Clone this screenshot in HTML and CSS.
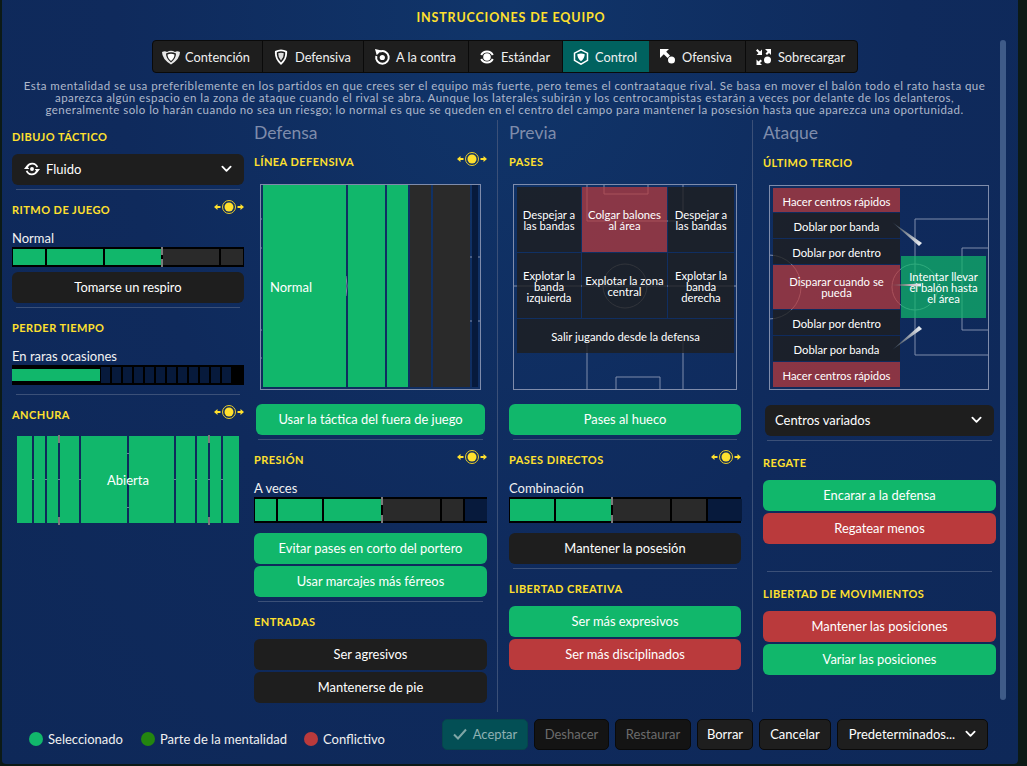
FILE: index.html
```html
<!DOCTYPE html>
<html lang="es">
<head>
<meta charset="utf-8">
<title>Instrucciones de equipo</title>
<link rel="stylesheet" href="styles.css">
</head>
<body>
<svg class="defs" width="0" height="0" aria-hidden="true">
  <symbol id="sun" viewBox="0 0 30 14">
    <circle cx="15" cy="7" r="4.500" fill="#ffe02e"/>
    <circle cx="15" cy="7" r="6.500" fill="none" stroke="#e8cc2c" stroke-width="1"/>
    <path d="M0 7l3.500-3v2h3v2h-3v2zM30 7l-3.500-3v2h-3v2h3v2z" fill="#ffe02e"/>
  </symbol>
  <symbol id="chev" viewBox="0 0 12 8">
    <path d="M1.500 1.500L6 6l4.500-4.500" fill="none" stroke="#fff" stroke-width="2" stroke-linecap="round" stroke-linejoin="round"/>
  </symbol>
</svg>
<main class="window">
  <h1 class="title">INSTRUCCIONES DE EQUIPO</h1>
  <nav class="tabs">
    <div class="tab t1"><svg class="ti" viewBox="0 0 18 16"><path d="M0 3q3-1.500 5 0 4-2.500 8 0 2-1.500 5 0 0 7-9 12.500Q0 10 0 3z" fill="#e8e8e8"/><path d="M4 4.500q5-2.500 10 0 0 5-5 9-5-4-5-9z" fill="#1e1e1e"/><path d="M5.500 5.500q3.500-1.500 7 0 0 3.500-3.500 6.500-3.500-3-3.500-6.500z" fill="#fff"/></svg>Contención</div>
    <div class="tab t2"><svg class="ti" viewBox="0 0 18 16"><path d="M3 2q6-3 12 0 1 8-6 14Q2 10 3 2z" fill="#fff"/><path d="M4.800 3.200q4.200-2 8.400 0 .5 6-4.200 10.300Q4.300 9.200 4.800 3.200z" fill="#1e1e1e"/><path d="M6.200 4.300q2.800-1 5.600 0 .2 4-2.800 7.300-3-3.300-2.800-7.300z" fill="#dcdcdc"/></svg>Defensiva</div>
    <div class="tab t3"><svg class="ti" viewBox="0 0 18 16"><path d="M7 2.600A6.300 6.300 0 1 1 3.300 7" fill="none" stroke="#fff" stroke-width="2"/><path d="M2 0l6.500 1.500-4.800 4.800z" fill="#fff"/><circle cx="9.300" cy="8.500" r="2.600" fill="#fff"/></svg>A la contra</div>
    <div class="tab t4"><svg class="ti" viewBox="0 0 18 16"><path d="M3.200 6A6.500 6.500 0 0 1 14.800 6M14.800 10A6.500 6.500 0 0 1 3.200 10" fill="none" stroke="#fff" stroke-width="2"/><circle cx="9" cy="8" r="3.800" fill="#fff"/></svg>Estándar</div>
    <div class="tab t5 active"><svg class="ti" viewBox="0 0 18 16"><path d="M9 .8l6.500 3.400v7.200L9 15.200 2.500 11.400V4.200z" fill="none" stroke="#fff" stroke-width="1.500"/><path d="M5.300 5.300Q9 3.500 12.700 5.300 12.700 9.500 9 12.300 5.300 9.500 5.300 5.300z" fill="#fff"/></svg>Control</div>
    <div class="tab t6"><svg class="ti" viewBox="0 0 18 16"><path d="M1 0h9L7.200 2.800 11 6.600 8.600 9 4.800 5.200 1 9z" fill="#fff"/><circle cx="12.500" cy="11" r="3.500" fill="#fff"/></svg>Ofensiva</div>
    <div class="tab t7"><svg class="ti" viewBox="0 0 18 16"><path d="M10 0h6v6l-2-2-2 2-1.500-1.500 2-2zM1 1.500l1.500-1.500 2.500 2.500L7 .5v5.500H1.500l2-2zM1.500 16v-5.500l2 2 2-2L7 12l-2 2 2 2z" fill="#fff"/><circle cx="12.500" cy="11" r="3.500" fill="#fff"/></svg>Sobrecargar</div>
  </nav>
  <p class="desc">Esta mentalidad se usa preferiblemente en los partidos en que crees ser el equipo más fuerte, pero temes el contraataque rival. Se basa en mover el balón todo el rato hasta que<br>aparezca algún espacio en la zona de ataque cuando el rival se abra. Aunque los laterales subirán y los centrocampistas estarán a veces por delante de los delanteros,<br>generalmente solo lo harán cuando no sea un riesgo; lo normal es que se queden en el centro del campo para mantener la posesión hasta que aparezca una oportunidad.</p>

  <div class="cols">
    <section class="col col-a">
      <h2 class="sec first">DIBUJO TÁCTICO</h2>
      <div class="select mt9"><svg class="fluid" viewBox="0 0 18 18"><path d="M3.500 6.500A6.200 6.200 0 0 1 15 7M14.500 11.500A6.200 6.200 0 0 1 3 11" fill="none" stroke="#fff" stroke-width="2"/><circle cx="9" cy="9" r="2.200" fill="#fff"/><path d="M0 9h6L3 5zM18 9h-6l3 4z" fill="#fff"/></svg><span class="grow">Fluido</span><svg class="chev"><use href="#chev"/></svg></div>
      <hr class="rule">
      <h2 class="sec">RITMO DE JUEGO<svg class="sun"><use href="#sun"/></svg></h2>
      <div class="label">Normal</div>
      <div class="bar b20">
        <i class="g w32"></i><i class="g w56"></i><i class="g w56"></i><b class="mark"></b><i class="d w56"></i><i class="d w22"></i>
      </div>
      <button class="btn dark mt5">Tomarse un respiro</button>
      <hr class="rule">
      <h2 class="sec">PERDER TIEMPO</h2>
      <div class="label">En raras ocasiones</div>
      <div class="bar waste">
        <i class="g w88"></i><i class="n"></i><i class="n"></i><i class="n"></i><i class="n"></i><i class="n"></i><i class="n"></i><i class="n"></i><i class="n"></i><i class="n"></i><i class="n"></i><i class="n"></i><i class="n end"></i>
      </div>
      <hr class="rule r9">
      <h2 class="sec">ANCHURA<svg class="sun"><use href="#sun"/></svg></h2>
      <div class="strips">
        <i style="width:15px"></i><i style="width:11px"></i><i class="tick" style="width:11px"></i><i style="width:19px"></i><i style="width:46px"></i><i style="width:45px"></i><i style="width:19px"></i><i class="tick" style="width:11px"></i><i style="width:11px"></i><i style="width:16px"></i>
        <span class="strip-label">Abierta</span>
      </div>
    </section>

    <section class="col col-b">
      <h3 class="head">Defensa</h3>
      <h2 class="sec mt11">LÍNEA DEFENSIVA<svg class="sun"><use href="#sun"/></svg></h2>
      <div class="pitch def">
        <svg class="lines" viewBox="0 0 221 206"><path d="M0 35h2M0 64h2M0 146h2M0 174h2M210 73h10M210 137h10M86 92q2 10 0 20" fill="none" stroke="#7f8cab"/></svg>
        <i class="g" style="width:83px"><span class="normal">Normal</span></i><i class="g" style="width:37px"></i><i class="g" style="width:21px"></i><i class="d" style="width:21px"></i><i class="d" style="width:37px"></i><i class="n" style="width:6px"></i>
      </div>
      <button class="btn green mt14 inset">Usar la táctica del fuera de juego</button>
      <hr class="rule r4">
      <h2 class="sec">PRESIÓN<svg class="sun"><use href="#sun"/></svg></h2>
      <div class="label">A veces</div>
      <div class="bar b26">
        <i class="g w21"></i><i class="g w44"></i><i class="g w57"></i><b class="mark"></b><i class="d w57"></i><i class="d w21"></i><i class="n w22"></i>
      </div>
      <button class="btn green mt10">Evitar pases en corto del portero</button>
      <button class="btn green mt2">Usar marcajes más férreos</button>
      <hr class="rule r4">
      <h2 class="sec">ENTRADAS</h2>
      <button class="btn dark mt9">Ser agresivos</button>
      <button class="btn dark mt2">Mantenerse de pie</button>
    </section>

    <section class="col col-c">
      <h3 class="head">Previa</h3>
      <h2 class="sec mt11">PASES</h2>
      <div class="pitch pass">
        <svg class="lines" viewBox="0 0 224 206"><path d="M74 0v37h96V0M91 0v10h44V0M0 102h224M74 205v-50h96v50M103 205v-12h44v12" fill="none" stroke="#7f8cab"/><circle cx="112" cy="102" r="22" fill="none" stroke="#7f8cab"/></svg>
        <div class="cell c1">Despejar a las bandas</div>
        <div class="cell red c2">Colgar balones al área</div>
        <div class="cell c3">Despejar a las bandas</div>
        <div class="cell c1">Explotar la banda izquierda</div>
        <div class="cell c2">Explotar la zona central</div>
        <div class="cell c3">Explotar la banda derecha</div>
        <div class="cell wide">Salir jugando desde la defensa</div>
      </div>
      <button class="btn green mt14">Pases al hueco</button>
      <hr class="rule r4">
      <h2 class="sec">PASES DIRECTOS<svg class="sun"><use href="#sun"/></svg></h2>
      <div class="label">Combinación</div>
      <div class="bar b26">
        <i class="g w44"></i><i class="g w55"></i><b class="mark"></b><i class="d w57"></i><i class="d w34"></i><i class="n w34"></i>
      </div>
      <button class="btn dark mt10">Mantener la posesión</button>
      <hr class="rule">
      <h2 class="sec">LIBERTAD CREATIVA</h2>
      <button class="btn green mt9">Ser más expresivos</button>
      <button class="btn red mt2">Ser más disciplinados</button>
    </section>

    <section class="col col-d">
      <h3 class="head">Ataque</h3>
      <h2 class="sec mt12">ÚLTIMO TERCIO</h2>
      <div class="pitch att">
        <svg class="lines" viewBox="0 0 220 205"><path d="M220 34h-74v136h74M220 63h-27v82h27" fill="none" stroke="#7f8cab"/><path d="M0 70a32 32 0 0 1 32 32 32 32 0 0 1-32 32" fill="none" stroke="#7f8cab"/><circle cx="146" cy="102" r="23" fill="none" stroke="#7f8cab"/></svg>
        <div class="stack">
          <div class="cell red h24">Hacer centros rápidos</div>
          <div class="cell h25">Doblar por banda</div>
          <div class="cell h25">Doblar por dentro</div>
          <div class="cell red h44">Disparar cuando se pueda</div>
          <div class="cell h25">Doblar por dentro</div>
          <div class="cell h25">Doblar por banda</div>
          <div class="cell red h25">Hacer centros rápidos</div>
        </div>
        <div class="target">Intentar llevar el balón hasta el área</div>
        <svg class="arrows" viewBox="0 0 220 205">
          <defs>
            <linearGradient id="a1" gradientUnits="userSpaceOnUse" x1="123" y1="37" x2="152" y2="60"><stop offset="0" stop-color="#1b2a3d"/><stop offset="1" stop-color="#f0f3f8"/></linearGradient>
            <linearGradient id="a2" gradientUnits="userSpaceOnUse" x1="121" y1="100" x2="152" y2="100"><stop offset="0" stop-color="#6b3a44"/><stop offset="1" stop-color="#f0f3f8"/></linearGradient>
            <linearGradient id="a3" gradientUnits="userSpaceOnUse" x1="123" y1="165" x2="152" y2="142"><stop offset="0" stop-color="#1b2a3d"/><stop offset="1" stop-color="#f0f3f8"/></linearGradient>
          </defs>
          <path d="M123 37L153 58 150 61z" fill="url(#a1)"/><path d="M121 100L152 98.500v3z" fill="url(#a2)"/><path d="M123 165L150 141 153 144z" fill="url(#a3)"/>
        </svg>
      </div>
      <div class="select mt15 pad10"><span class="grow">Centros variados</span><svg class="chev"><use href="#chev"/></svg></div>
      <hr class="rule r4">
      <h2 class="sec mt14">REGATE</h2>
      <button class="btn green mt9">Encarar a la defensa</button>
      <button class="btn red mt2">Regatear menos</button>
      <hr class="rule r27">
      <h2 class="sec mt14">LIBERTAD DE MOVIMIENTOS</h2>
      <button class="btn red mt9">Mantener las posiciones</button>
      <button class="btn green mt2">Variar las posiciones</button>
    </section>
  </div>

  <footer class="foot">
    <div class="legend">
      <span class="lg l1"><i class="dot d1"></i>Seleccionado</span>
      <span class="lg l2"><i class="dot d2"></i>Parte de la mentalidad</span>
      <span class="lg l3"><i class="dot d3"></i>Conflictivo</span>
    </div>
    <div class="actions">
      <button class="act ok"><svg class="check" viewBox="0 0 14 12"><path d="M1 6.500L5 10.500 13 1.500" fill="none" stroke="#7fa6a6" stroke-width="2"/></svg>Aceptar</button>
      <button class="act off wd">Deshacer</button>
      <button class="act off wr">Restaurar</button>
      <button class="act wb">Borrar</button>
      <button class="act wc">Cancelar</button>
      <button class="act wp">Predeterminados...<svg class="chev"><use href="#chev"/></svg></button>
    </div>
  </footer>
  <div class="scroll"></div>
</main>
</body>
</html>
```
FILE: styles.css
```css
* { box-sizing: border-box; }
html, body { margin: 0; height: 100%; }
body {
  width: 1027px; height: 766px; overflow: hidden;
  background: #0c1a16;
  font-family: "Lato", "Liberation Sans", sans-serif;
  color: #fff;
  font-size: 13px;
}
.defs { position: absolute; }
.window {
  position: relative;
  height: 764px; margin-left: 2px;
  width: 1016px;
  background: radial-gradient(ellipse at 50% 0%, #10356a 0%, #0f2a5c 55%, #0e2858 100%);
  border-radius: 0 0 4px 4px;
  overflow: hidden;
}
.title {
  margin: 0; padding: 10px 0 0 2px; height: 40px;
  text-align: center; font-size: 12.5px; line-height: 16px; font-weight: 700;
  color: #ffe02e; letter-spacing: .85px;
}
.tabs {
  display: flex; margin-left: 150px; width: 706px; height: 33px;
  background: #1e1e1e; border: 1px solid #0a0a0a; border-radius: 4px; overflow: hidden;
}
.tab {
  display: flex; align-items: center; justify-content: center; gap: 5px; padding-right: 3px;
  border-right: 1px solid #0a0a0a; font-size: 12.8px; color: #f0f0f0;
}
.tab.active { background: #00625f; border-right: 0; }
.t1 { width: 110px; } .t2 { width: 101px; } .t3 { width: 105px; } .t4 { width: 94px; }
.t5 { width: 86px; } .t6 { width: 97px; } .t7 { flex: 1; border-right: 0; }
.ti { width: 18px; height: 16px; flex: none; }
.desc {
  margin: 7px 0 0; height: 40px; font-size: 11.5px; line-height: 12px; letter-spacing: .45px;
  text-align: center; color: #aeb8cb; padding-right: 11px;
}
.cols { display: flex; height: 592px; }
.col { height: 100%; display: flex; flex-direction: column; padding-top: 5px; }
.col-a { width: 235px; margin-left: 10px; padding-right: 3px; }
.col-b { width: 250px; padding-left: 7px; padding-right: 10px; }
.col-c { width: 255px; border-left: 1px solid #3b5078; padding-left: 11px; padding-right: 11px; }
.col-d { width: 244px; border-left: 1px solid #3b5078; padding-left: 10px; }
.head { margin: 0; height: 18px; font-size: 17.5px; line-height: 16px; font-weight: 400; color: #7f8cab; }
.sec {
  display: flex; align-items: center; justify-content: space-between;
  margin: 12px 0 0; height: 16px; line-height: 16px;
  font-size: 11px; font-weight: 700; letter-spacing: .45px; color: #ffe02e;
}
.sec.first { margin-top: 4px; }
.sec.mt11 { margin-top: 11px; } .sec.mt12 { margin-top: 12px; } .sec.mt14 { margin-top: 14px; }
.sun { width: 30px; height: 14px; margin-top: -6px; }
.rule { margin: 4px 4px 0; height: 1px; border: 0; background: #3b5078; flex: none; }
.r4 { margin-top: 4px; } .r9 { margin-top: 9px; } .r27 { margin-top: 27px; }
.label { margin-top: 12px; height: 16px; line-height: 16px; font-size: 13px; color: #f2f2f2; }
.bar { position: relative; display: flex; gap: 2px; margin-top: 1px; padding: 2px 1px; background: #000; }
.b20 { height: 20px; } .b26 { height: 26px; }
.bar i { display: block; height: 100%; flex: none; }
.g { background: #11b76b; } .d { background: #2a2a2a; } .n { background: #071a3c; }
.w21 { width: 21px; } .w22 { width: 22px; } .w32 { width: 32px; } .w34 { width: 34px; } .w44 { width: 44px; }
.w55 { width: 55px; } .w56 { width: 56px; } .w57 { width: 57px; } .w88 { width: 88px; }
.mark {
  display: block; width: 2px; margin: -2px; flex: none; position: relative; z-index: 1;
  background: linear-gradient(#7b7b7b 0 8px, #000 8px calc(100% - 8px), #7b7b7b calc(100% - 8px));
}
.waste { height: 20px; padding: 0; gap: 2px; align-items: center; }
.waste i { height: 16px; }
.waste .g { height: 12px; margin-right: -1px; }
.waste .n { width: 9px; }
.waste .end { margin-right: 0; }
.select {
  display: flex; align-items: center; height: 31px; padding: 0 12px 1px; flex: none;
  background: #1e1e1e; border-radius: 6px; font-size: 13px;
}
.pad10 { padding-left: 10px; }
.grow { flex: 1; }
.fluid { width: 16px; height: 16px; margin-right: 6px; }
.chev { width: 11px; height: 8px; flex: none; }
.btn {
  display: block; width: 100%; height: 31px; flex: none; border: 0; border-radius: 6px;
  font: 12.9px/31px "Lato", "Liberation Sans", sans-serif; color: #fff; text-align: center; padding: 0;
}
.btn.inset { width: 229px; margin-left: 2px; }
.dark { background: #1e1e1e; } .green { background: #11b76b; } .red { background: #ba3a3c; }
.mt2 { margin-top: 2px; } .mt5 { margin-top: 5px; } .mt9 { margin-top: 9px; } .mt10 { margin-top: 10px; }
.mt14 { margin-top: 14px; } .mt15 { margin-top: 15px; }
.strips {
  position: relative; display: flex; gap: 2px; height: 87px; margin: 13px 5px 0; flex: none;
  background:
    linear-gradient(#6f7f9f, #6f7f9f) 0 43px / 100% 1px no-repeat,
    linear-gradient(#6f7f9f, #6f7f9f) 110px 17px / 2px 1px no-repeat,
    linear-gradient(#6f7f9f, #6f7f9f) 110px 71px / 2px 1px no-repeat;
}
.strips i { display: block; height: 100%; background: #11b76b; position: relative; flex: none; }
.strips .tick::after {
  content: ""; position: absolute; right: -2px; top: -1px; bottom: -2px; width: 2px;
  background: linear-gradient(#7b7b7b 0 8px, transparent 8px calc(100% - 8px), #7b7b7b calc(100% - 8px));
}
.strip-label { position: absolute; left: 0; right: 0; top: 36px; text-align: center; font-size: 13px; line-height: 16px; }
.pitch { position: relative; margin-top: 14px; height: 206px; border: 1px solid #7f8cab; flex: none; }
.lines, .arrows { position: absolute; left: -1px; top: -1px; width: calc(100% + 2px); height: calc(100% + 2px); }
.arrows { z-index: 3; pointer-events: none; }
.def { display: flex; gap: 2px; margin-left: 6px; width: 221px; padding: 0 2px 2px 2px; }
.def i { display: block; height: 100%; position: relative; flex: none; }
.normal { position: absolute; left: 7px; top: 94px; font-style: normal; font-size: 13px; line-height: 16px; color: #fff; }
.pass {
  display: grid; grid-template-columns: 64px 85px 66px; grid-template-rows: 65px 65px 34px;
  gap: 1px; padding: 2px 3px; margin-left: 4px; width: 224px; align-content: start;
}
.cell {
  position: relative; display: flex; align-items: center; justify-content: center; text-align: center;
  background: rgba(30,30,30,.8); font-size: 11.3px; line-height: 11px; color: #fff; padding: 1px 2px 0;
}
.cell.red { background: rgba(186,58,60,.72); }
.wide { grid-column: 1 / -1; }
.att { margin-left: 6px; width: 220px; height: 205px; padding: 2px 3px; }
.stack { position: relative; width: 127px; display: flex; flex-direction: column; gap: 1px; }
.stack .cell { padding-top: 2px; }
.h24 { height: 24px; } .h25 { height: 25px; }
.stack .h44 { height: 44px; padding: 0 8px; }
.target {
  position: absolute; left: 131px; top: 70px; width: 85px; height: 62px; z-index: 2;
  display: flex; align-items: center; justify-content: center; text-align: center;
  background: rgba(17,183,107,.72); font-size: 11.3px; line-height: 11px; padding: 0 6px;
}
.col-d .select { width: 229px; margin-left: 2px; }
.foot { display: flex; height: 33px; margin-top: 7px; position: relative; }
.legend { display: flex; align-items: center; padding-top: 7px; padding-left: 27px; height: 100%; width: 440px; }
.lg { display: flex; align-items: center; gap: 5px; color: #f0f0f0; font-size: 13px; }
.l1 { width: 112px; } .l2 { width: 163px; }
.dot { width: 14px; height: 14px; border-radius: 50%; flex: none; }
.d1 { background: #11b76b; } .d2 { background: #23860f; } .d3 { background: #ba3a3c; }
.actions { display: flex; gap: 6px; height: 31px; }
.act {
  display: flex; align-items: center; justify-content: center; gap: 6px; height: 31px; padding: 0 0 2px;
  border: 1px solid #0a0a0a; border-radius: 5px; background: #1e1e1e; color: #fff;
  font: 13px "Lato", "Liberation Sans", sans-serif;
}
.ok { width: 86px; background: #034f55; border-color: #06454c; color: #8fb1b3; }
.check { width: 14px; height: 12px; }
.off { background: #141414; color: #6c6c6c; }
.wd { width: 75px; } .wr { width: 76px; } .wb { width: 56px; } .wc { width: 72px; }
.wp { width: 151px; gap: 10px; }
.scroll { position: absolute; left: 998px; top: 40px; width: 6px; height: 660px; background: #3f5b88; border-radius: 3px; }
```
